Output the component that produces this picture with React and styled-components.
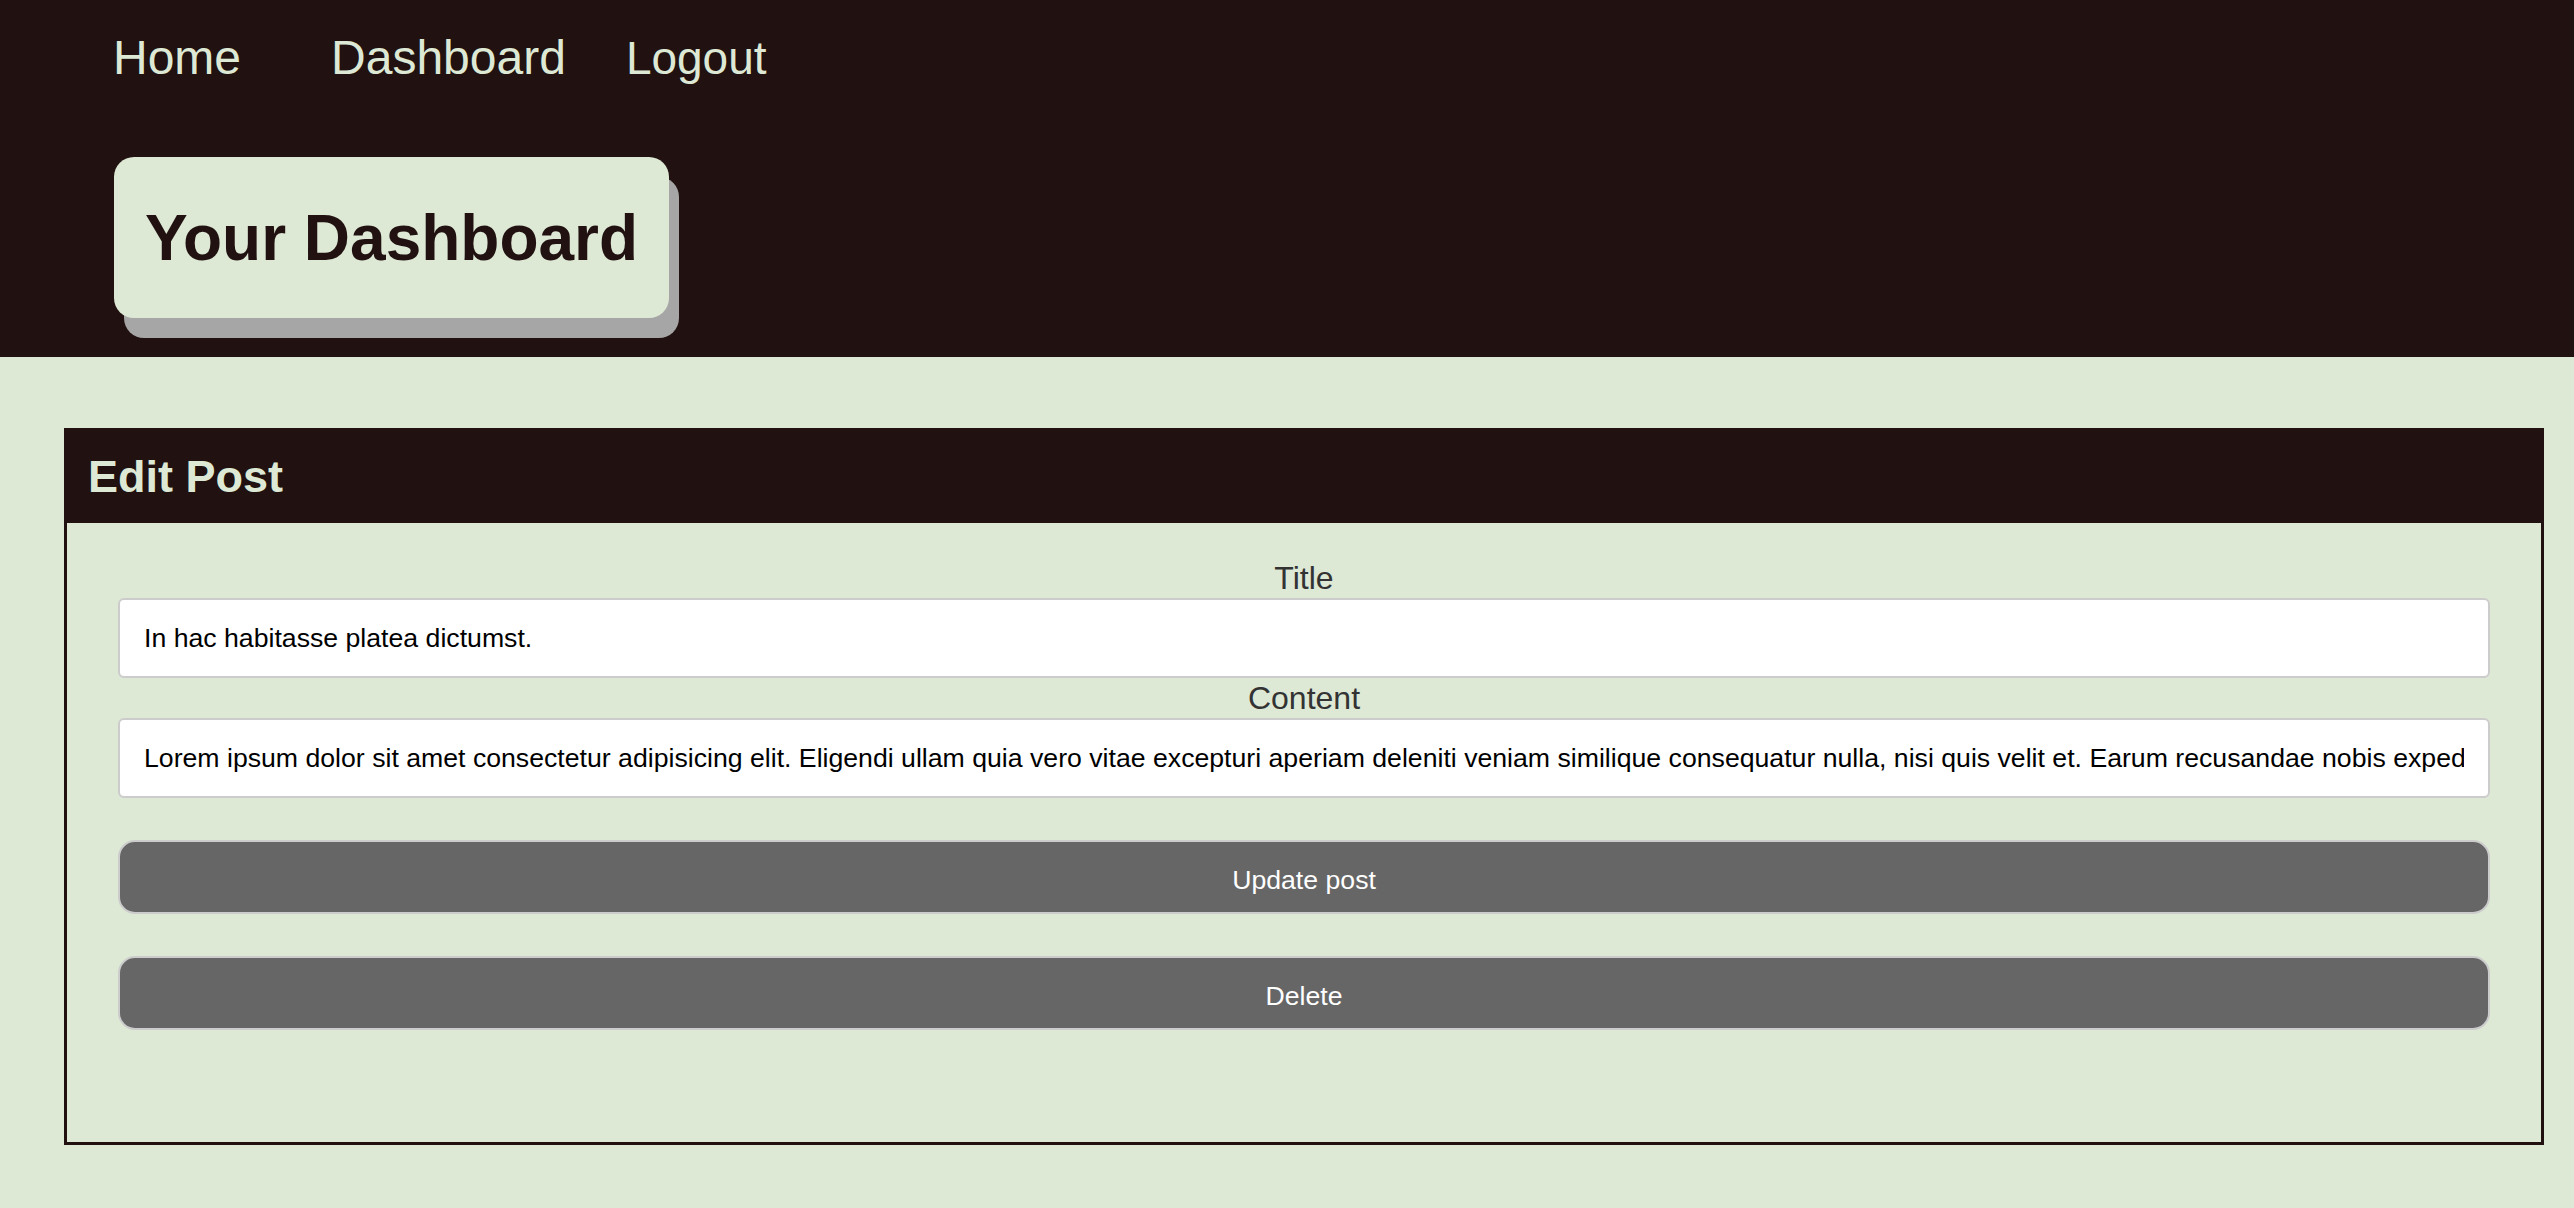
import React from "react";
import styled, { createGlobalStyle } from "styled-components";

const GlobalStyle = createGlobalStyle`
  html, body {
    margin: 0;
    padding: 0;
    background-color: #dde9d5;
    font-family: "Liberation Sans", Arial, sans-serif;
  }
  * {
    box-sizing: border-box;
  }
`;

const Header = styled.header`
  background-color: #211111;
  padding: 30px 0 39px 0;
`;

const Nav = styled.nav`
  display: flex;
  align-items: baseline;
  padding-left: 113px;
`;

const NavLink = styled.a`
  color: #dde9d5;
  font-size: 48px;
  text-decoration: none;
  margin-right: ${(props) => props.$gap || 0}px;
  cursor: pointer;
`;

const LogoutButton = styled.button`
  background: none;
  border: none;
  padding: 0;
  color: #dde9d5;
  font-family: inherit;
  font-size: 46px;
  cursor: pointer;
`;

const TitleCard = styled.h1`
  display: inline-block;
  margin: 72px 0 0 114px;
  padding: 44px 31px 43px 31px;
  background-color: #dde9d5;
  color: #211111;
  font-size: 64px;
  font-weight: 700;
  line-height: normal;
  border-radius: 20px;
  box-shadow: 10px 20px 0 #a6a6a6;
`;

const Main = styled.main`
  padding: 71px 30px 64px 64px;
`;

const EditCard = styled.section`
  border: 3px solid #211111;
`;

const CardHeader = styled.h2`
  margin: 0;
  padding: 20px 21px;
  background-color: #211111;
  color: #dde9d5;
  font-size: 45px;
  font-weight: 700;
  line-height: normal;
`;

const Form = styled.form`
  display: flex;
  flex-direction: column;
  padding: 35px 51px 112px 51px;
`;

const Label = styled.label`
  display: block;
  text-align: center;
  color: #333333;
  font-size: 32px;
  line-height: 40px;
`;

const Input = styled.input`
  width: 100%;
  height: 80px;
  padding: 0 24px;
  border: 2px solid #cccccc;
  border-radius: 6px;
  background-color: #ffffff;
  color: #000000;
  font-family: inherit;
  font-size: 26.67px;
  outline: none;
`;

const ActionButton = styled.button`
  width: 100%;
  height: 74px;
  margin-top: 42px;
  padding: 6px 0 0 0;
  border: 2px solid #cccccc;
  border-radius: 17px;
  background-color: #666666;
  color: #ffffff;
  font-family: inherit;
  font-size: 26.67px;
  cursor: pointer;
`;

const post = {
  title: "In hac habitasse platea dictumst.",
  content:
    "Lorem ipsum dolor sit amet consectetur adipisicing elit. Eligendi ullam quia vero vitae excepturi aperiam deleniti veniam similique consequatur nulla, nisi quis velit et. Earum recusandae nobis expedita laborum.",
};

const App = () => {
  return (
    <>
      <GlobalStyle />
      <Header>
        <Nav>
          <NavLink $gap={90}>Home</NavLink>
          <NavLink $gap={60}>Dashboard</NavLink>
          <LogoutButton>Logout</LogoutButton>
        </Nav>
        <TitleCard>Your Dashboard</TitleCard>
      </Header>
      <Main>
        <EditCard>
          <CardHeader>Edit Post</CardHeader>
          <Form onSubmit={(e) => e.preventDefault()}>
            <Label htmlFor="post-title">Title</Label>
            <Input id="post-title" type="text" defaultValue={post.title} />
            <Label htmlFor="post-content">Content</Label>
            <Input id="post-content" type="text" defaultValue={post.content} />
            <ActionButton type="submit">Update post</ActionButton>
            <ActionButton type="button">Delete</ActionButton>
          </Form>
        </EditCard>
      </Main>
    </>
  );
};

export default App;
